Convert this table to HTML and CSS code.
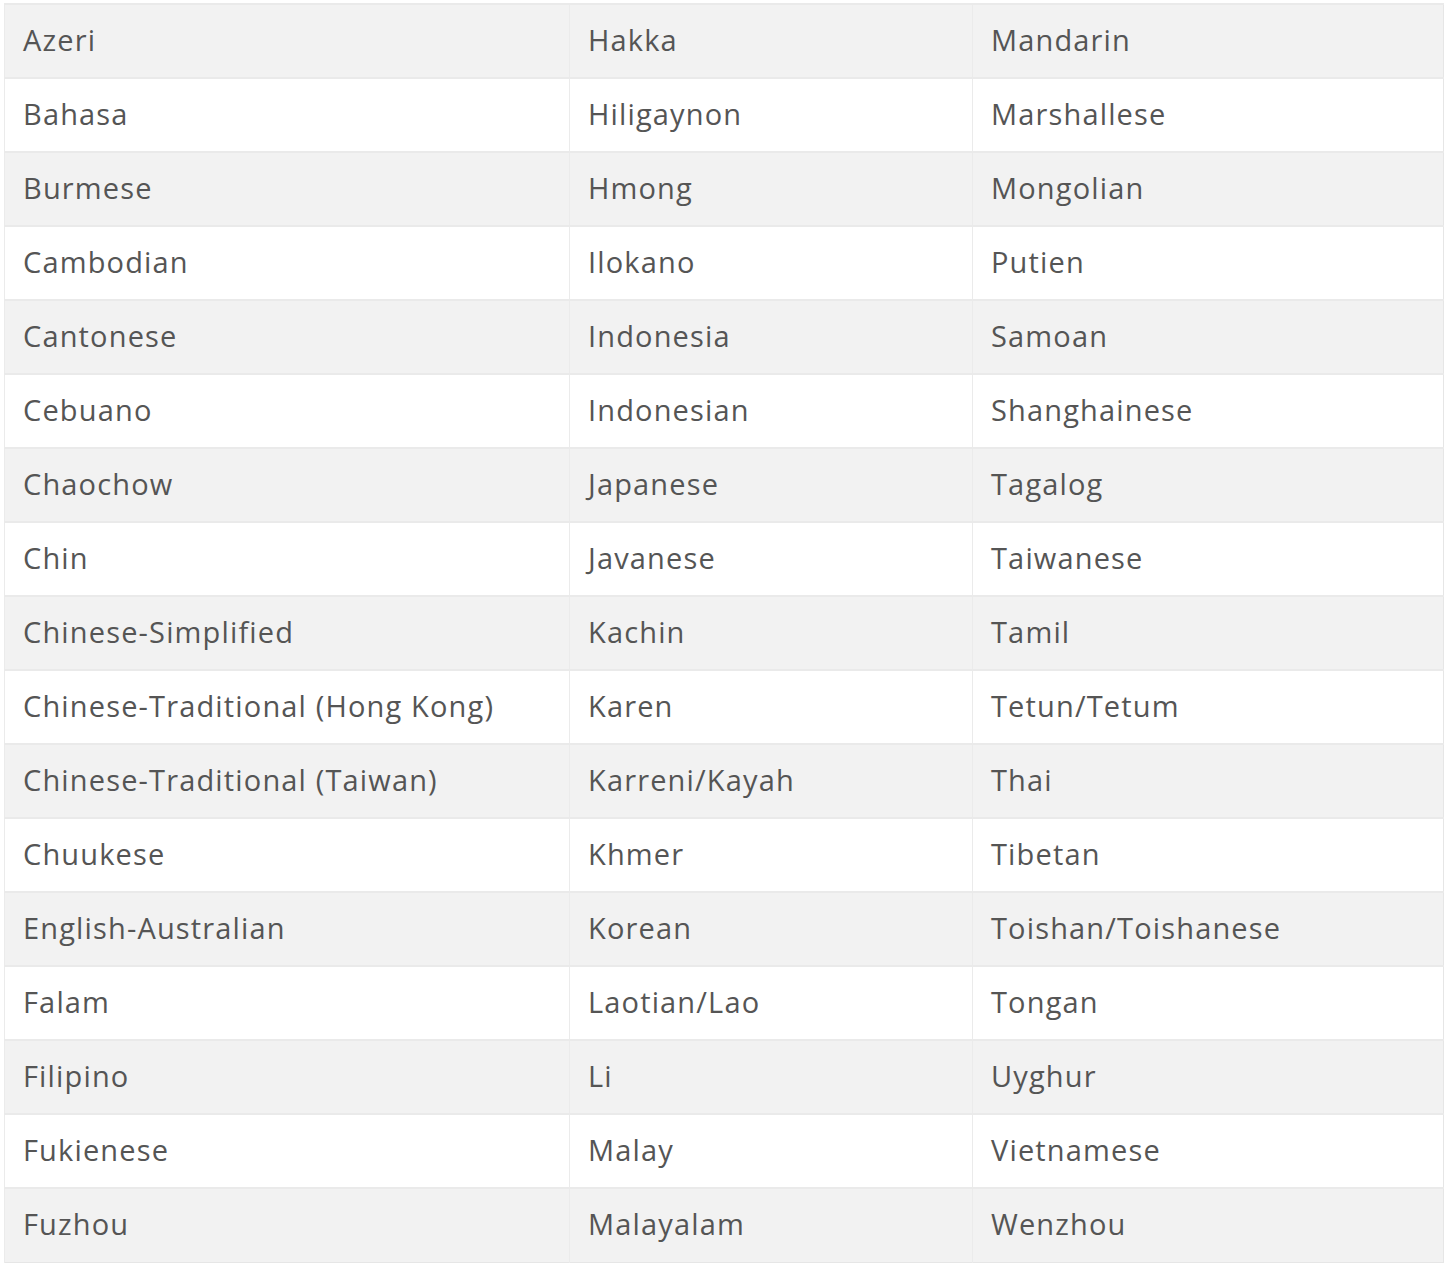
FILE: index.html
```html
<!DOCTYPE html>
<html lang="en">
<head>
<meta charset="utf-8">
<title>Languages</title>
<link rel="stylesheet" href="styles.css">
</head>
<body>
<div class="wrap">
<table class="langs">
<colgroup><col class="c1"><col class="c2"><col class="c3"></colgroup>
<tbody>
<tr><td>Azeri</td><td>Hakka</td><td>Mandarin</td></tr>
<tr><td>Bahasa</td><td>Hiligaynon</td><td>Marshallese</td></tr>
<tr><td>Burmese</td><td>Hmong</td><td>Mongolian</td></tr>
<tr><td>Cambodian</td><td>Ilokano</td><td>Putien</td></tr>
<tr><td>Cantonese</td><td>Indonesia</td><td>Samoan</td></tr>
<tr><td>Cebuano</td><td>Indonesian</td><td>Shanghainese</td></tr>
<tr><td>Chaochow</td><td>Japanese</td><td>Tagalog</td></tr>
<tr><td>Chin</td><td>Javanese</td><td>Taiwanese</td></tr>
<tr><td>Chinese-Simplified</td><td>Kachin</td><td>Tamil</td></tr>
<tr><td>Chinese-Traditional (Hong Kong)</td><td>Karen</td><td>Tetun/Tetum</td></tr>
<tr><td>Chinese-Traditional (Taiwan)</td><td>Karreni/Kayah</td><td>Thai</td></tr>
<tr><td>Chuukese</td><td>Khmer</td><td>Tibetan</td></tr>
<tr><td>English-Australian</td><td>Korean</td><td>Toishan/Toishanese</td></tr>
<tr><td>Falam</td><td>Laotian/Lao</td><td>Tongan</td></tr>
<tr><td>Filipino</td><td>Li</td><td>Uyghur</td></tr>
<tr><td>Fukienese</td><td>Malay</td><td>Vietnamese</td></tr>
<tr><td>Fuzhou</td><td>Malayalam</td><td>Wenzhou</td></tr>
</tbody>
</table>
</div>
</body>
</html>
```
FILE: styles.css
```css
html, body { margin: 0; padding: 0; background: #fff; }
.wrap { padding: 3px 3px 0 4px; }
.langs {
  width: 1439px;
  border-collapse: collapse;
  table-layout: fixed;
  font-family: "Open Sans", sans-serif;
  font-size: 29px;
  letter-spacing: 1.15px;
  color: #555;
  border: 1px solid #e6e6e6;
}
.c1 { width: 565px; }
.c2 { width: 403px; }
.c3 { width: 471px; }
.langs td {
  height: 74px;
  box-sizing: border-box;
  padding: 0 0 4px 18px;
  vertical-align: middle;
  border-top: 2px solid #eaeaea;
  border-left: 1px solid #ebebeb;
  white-space: nowrap;
}
.langs tr:nth-child(odd) td { background: #f2f2f2; }
.langs tr:nth-child(even) td { background: #fff; }
```
